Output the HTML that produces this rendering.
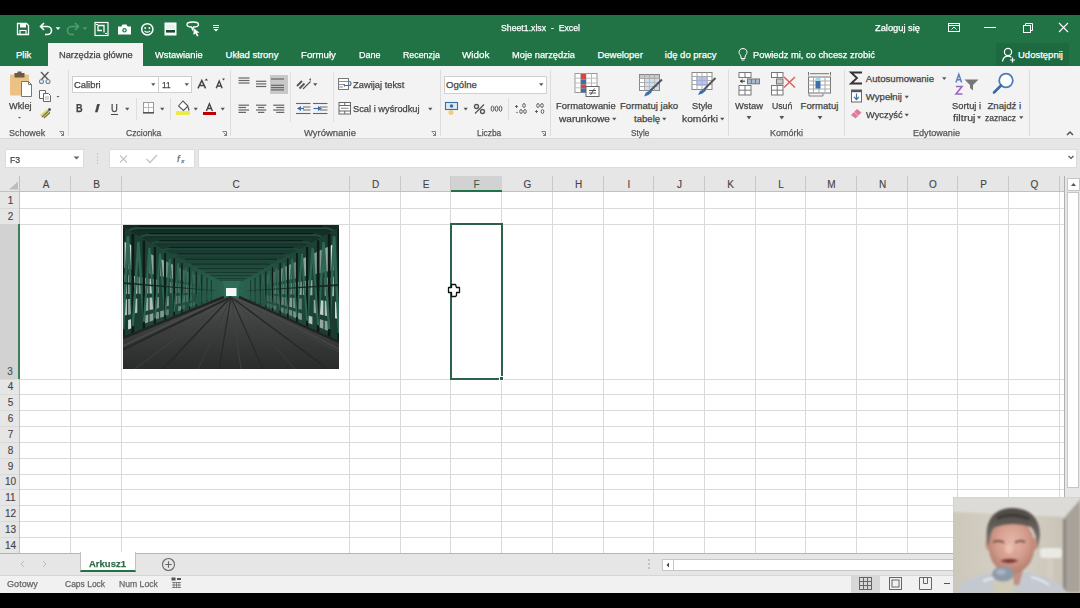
<!DOCTYPE html><html><head><meta charset="utf-8"><style>
*{margin:0;padding:0;box-sizing:border-box}
html,body{width:1080px;height:608px;overflow:hidden;background:#000}
body{font-family:"Liberation Sans",sans-serif;color:#444}
.a{position:absolute}
.t{position:absolute;white-space:pre;line-height:1;-webkit-text-stroke:0.25px currentColor}
#root{position:relative;width:1080px;height:608px;overflow:hidden;background:#fff}
.w{color:#fff}
.rb{font-size:9.6px;color:#444}
.gl{font-size:9.4px;color:#666}
.hd{font-size:10px;color:#444;text-align:center;-webkit-text-stroke:0.12px currentColor}
</style></head><body><div id="root">
<div class="a" style="left:0;top:0;width:1080px;height:15px;background:#000"></div>
<div class="a" style="left:0;top:15px;width:1080px;height:51px;background:#217346"></div>
<div class="a" style="left:0;top:593px;width:1080px;height:15px;background:#000"></div>
<div class="a" style="left:48px;top:43px;width:95px;height:24px;background:#f3f3f3"></div>
<div class="a" style="left:0;top:66px;width:1080px;height:73px;background:#f3f3f3;border-bottom:1px solid #d8d8d8"></div>
<div class="a" style="left:0;top:139px;width:1080px;height:37px;background:#e6e6e6"></div>
<div class="a" style="left:5px;top:149px;width:79px;height:19px;background:#fff;border:1px solid #dcdcdc"></div>
<div class="a" style="left:109px;top:149px;width:86px;height:19px;background:#fff;border:1px solid #dcdcdc"></div>
<div class="a" style="left:198px;top:149px;width:879px;height:19px;background:#fff;border:1px solid #dcdcdc"></div>
<div class="a" style="left:0;top:176px;width:1066px;height:16px;background:#e6e6e6"></div>
<div class="a" style="left:0;top:192px;width:20px;height:361px;background:#e6e6e6"></div>
<svg class="a" style="left:0;top:0" width="1080" height="608"><rect x="70" y="176" width="1" height="16" fill="#c8c8c8"/><rect x="70" y="192" width="1" height="361" fill="#dadada"/><rect x="121" y="176" width="1" height="16" fill="#c8c8c8"/><rect x="121" y="192" width="1" height="361" fill="#dadada"/><rect x="349" y="176" width="1" height="16" fill="#c8c8c8"/><rect x="349" y="192" width="1" height="361" fill="#dadada"/><rect x="400" y="176" width="1" height="16" fill="#c8c8c8"/><rect x="400" y="192" width="1" height="361" fill="#dadada"/><rect x="450" y="176" width="1" height="16" fill="#c8c8c8"/><rect x="450" y="192" width="1" height="361" fill="#dadada"/><rect x="501" y="176" width="1" height="16" fill="#c8c8c8"/><rect x="501" y="192" width="1" height="361" fill="#dadada"/><rect x="552" y="176" width="1" height="16" fill="#c8c8c8"/><rect x="552" y="192" width="1" height="361" fill="#dadada"/><rect x="603" y="176" width="1" height="16" fill="#c8c8c8"/><rect x="603" y="192" width="1" height="361" fill="#dadada"/><rect x="653" y="176" width="1" height="16" fill="#c8c8c8"/><rect x="653" y="192" width="1" height="361" fill="#dadada"/><rect x="704" y="176" width="1" height="16" fill="#c8c8c8"/><rect x="704" y="192" width="1" height="361" fill="#dadada"/><rect x="755" y="176" width="1" height="16" fill="#c8c8c8"/><rect x="755" y="192" width="1" height="361" fill="#dadada"/><rect x="805" y="176" width="1" height="16" fill="#c8c8c8"/><rect x="805" y="192" width="1" height="361" fill="#dadada"/><rect x="856" y="176" width="1" height="16" fill="#c8c8c8"/><rect x="856" y="192" width="1" height="361" fill="#dadada"/><rect x="907" y="176" width="1" height="16" fill="#c8c8c8"/><rect x="907" y="192" width="1" height="361" fill="#dadada"/><rect x="957" y="176" width="1" height="16" fill="#c8c8c8"/><rect x="957" y="192" width="1" height="361" fill="#dadada"/><rect x="1008" y="176" width="1" height="16" fill="#c8c8c8"/><rect x="1008" y="192" width="1" height="361" fill="#dadada"/><rect x="1059" y="176" width="1" height="16" fill="#c8c8c8"/><rect x="1059" y="192" width="1" height="361" fill="#dadada"/><rect x="0" y="208" width="1064" height="1" fill="#dadada"/><rect x="0" y="224" width="1064" height="1" fill="#dadada"/><rect x="0" y="379" width="1064" height="1" fill="#dadada"/><rect x="0" y="394" width="1064" height="1" fill="#dadada"/><rect x="0" y="410" width="1064" height="1" fill="#dadada"/><rect x="0" y="426" width="1064" height="1" fill="#dadada"/><rect x="0" y="442" width="1064" height="1" fill="#dadada"/><rect x="0" y="458" width="1064" height="1" fill="#dadada"/><rect x="0" y="474" width="1064" height="1" fill="#dadada"/><rect x="0" y="489" width="1064" height="1" fill="#dadada"/><rect x="0" y="505" width="1064" height="1" fill="#dadada"/><rect x="0" y="521" width="1064" height="1" fill="#dadada"/><rect x="0" y="537" width="1064" height="1" fill="#dadada"/><rect x="0" y="553" width="1064" height="1" fill="#dadada"/><rect x="19" y="176" width="1" height="377" fill="#c0c0c0"/><rect x="0" y="191" width="1064" height="1" fill="#c0c0c0"/><path d="M18 181.5V189.5H9Z" fill="#bdbdbd"/></svg>
<div class="t hd" style="left:21px;top:180px;width:50px">A</div>
<div class="t hd" style="left:71px;top:180px;width:51px">B</div>
<div class="t hd" style="left:122px;top:180px;width:228px">C</div>
<div class="t hd" style="left:350px;top:180px;width:51px">D</div>
<div class="t hd" style="left:401px;top:180px;width:50px">E</div>
<div class="t hd" style="left:451px;top:180px;width:51px">F</div>
<div class="t hd" style="left:502px;top:180px;width:51px">G</div>
<div class="t hd" style="left:553px;top:180px;width:51px">H</div>
<div class="t hd" style="left:604px;top:180px;width:50px">I</div>
<div class="t hd" style="left:654px;top:180px;width:51px">J</div>
<div class="t hd" style="left:705px;top:180px;width:51px">K</div>
<div class="t hd" style="left:756px;top:180px;width:50px">L</div>
<div class="t hd" style="left:806px;top:180px;width:51px">M</div>
<div class="t hd" style="left:857px;top:180px;width:51px">N</div>
<div class="t hd" style="left:908px;top:180px;width:50px">O</div>
<div class="t hd" style="left:958px;top:180px;width:51px">P</div>
<div class="t hd" style="left:1009px;top:180px;width:51px">Q</div>
<div class="t hd" style="left:0;top:196px;width:21px">1</div>
<div class="t hd" style="left:0;top:212px;width:21px">2</div>
<div class="t hd" style="left:0;top:367px;width:21px">3</div>
<div class="t hd" style="left:0;top:382px;width:21px">4</div>
<div class="t hd" style="left:0;top:398px;width:21px">5</div>
<div class="t hd" style="left:0;top:414px;width:21px">6</div>
<div class="t hd" style="left:0;top:430px;width:21px">7</div>
<div class="t hd" style="left:0;top:446px;width:21px">8</div>
<div class="t hd" style="left:0;top:462px;width:21px">9</div>
<div class="t hd" style="left:0;top:477px;width:21px">10</div>
<div class="t hd" style="left:0;top:493px;width:21px">11</div>
<div class="t hd" style="left:0;top:509px;width:21px">12</div>
<div class="t hd" style="left:0;top:525px;width:21px">13</div>
<div class="t hd" style="left:0;top:541px;width:21px">14</div>
<div class="a" style="left:0;top:224px;width:20px;height:155px;background:#d2d2d2;border-right:2px solid #3f7d5c"></div>
<div class="t hd" style="left:0;top:367px;width:20px;color:#3c5a4a">3</div>
<div class="a" style="left:451px;top:176px;width:51px;height:16px;background:#d2d2d2;border-bottom:2px solid #217346"></div>
<div class="t hd" style="left:451px;top:180px;width:51px;color:#3c5a4a">F</div>
<div class="a" style="left:450px;top:223px;width:53px;height:157px;border:2px solid #2c6249"></div>
<div class="a" style="left:499px;top:376px;width:5px;height:5px;background:#2c6249;border:1px solid #fff"></div>
<div class="a" style="left:1064px;top:176px;width:16px;height:377px;background:#e6e6e6;border-left:1px solid #b0b0b0"></div>
<div class="a" style="left:1067px;top:178px;width:13px;height:13px;background:#fff;border:1px solid #c6c6c6"></div>
<svg class="a" style="left:1067px;top:178px" width="13" height="13"><path d="M4 8 L6.5 5 L9 8 Z" fill="#555"/></svg>
<div class="a" style="left:1067px;top:192px;width:12px;height:296px;background:#fff;border:1px solid #c6c6c6"></div>
<div class="a" style="left:0;top:553px;width:1080px;height:22px;background:#e6e6e6;border-top:1px solid #b4b4b4"></div>
<div class="a" style="left:80px;top:552px;width:56px;height:20px;background:#fff;border-left:1px solid #c0c0c0;border-right:1px solid #c0c0c0;border-bottom:2px solid #217346"></div>
<div class="t" style="left:89px;top:559.20px;font-size:9.8px;color:#2f6e4a;font-weight:bold;transform:scaleX(0.970);transform-origin:0 0;">Arkusz1</div>
<svg class="a" style="left:15px;top:558px" width="40" height="12"><path d="M9 3 L6 6 L9 9" stroke="#bbb" fill="none"/><path d="M28 3 L31 6 L28 9" stroke="#bbb" fill="none"/></svg>
<svg class="a" style="left:161px;top:557px" width="15" height="15"><circle cx="7.5" cy="7.5" r="6" stroke="#666" stroke-width="1.1" fill="none"/><path d="M7.5 4.3V10.7M4.3 7.5H10.7" stroke="#666" stroke-width="1.1"/></svg>
<svg class="a" style="left:646px;top:557px" width="6" height="14"><circle cx="3" cy="3" r="0.8" fill="#999"/><circle cx="3" cy="7" r="0.8" fill="#999"/><circle cx="3" cy="11" r="0.8" fill="#999"/></svg>
<div class="a" style="left:662px;top:559px;width:418px;height:12px;background:#fff;border:1px solid #c6c6c6"></div>
<div class="a" style="left:662px;top:559px;width:12px;height:12px;background:#fff;border:1px solid #c6c6c6"></div>
<svg class="a" style="left:662px;top:559px" width="12" height="12"><path d="M7 3.5 L4.5 6 L7 8.5 Z" fill="#444"/></svg>
<div class="a" style="left:0;top:575px;width:1080px;height:18px;background:#f1f1f1;border-top:1px solid #d6d6d6"></div>
<div class="t" style="left:7px;top:578.84px;font-size:9.4px;color:#666;font-weight:normal;transform:scaleX(0.973);transform-origin:0 0;">Gotowy</div>
<div class="t" style="left:65px;top:578.84px;font-size:9.4px;color:#666;font-weight:normal;transform:scaleX(0.905);transform-origin:0 0;">Caps Lock</div>
<div class="t" style="left:118.5px;top:578.84px;font-size:9.4px;color:#666;font-weight:normal;transform:scaleX(0.919);transform-origin:0 0;">Num Lock</div>
<svg class="a" style="left:171px;top:577px" width="11" height="12"><rect x="0.5" y="0.5" width="4" height="3" fill="#555"/><rect x="6" y="1" width="4" height="2" fill="#555"/><path d="M1 5.5H10M1 8H10M1 10.5H10M3 5V11M5.5 5V11M8 5V11" stroke="#777" stroke-width="0.9"/></svg>
<div class="a" style="left:851px;top:576px;width:29px;height:17px;background:#d8d8d8"></div>
<svg class="a" style="left:859px;top:577px" width="13" height="13"><rect x="0.5" y="0.5" width="12" height="12" fill="none" stroke="#666"/><path d="M4.5 0.5V12.5M8.5 0.5V12.5M0.5 4.5H12.5M0.5 8.5H12.5" stroke="#666"/></svg>
<svg class="a" style="left:889px;top:577px" width="13" height="13"><rect x="0.5" y="0.5" width="12" height="12" fill="none" stroke="#666"/><rect x="3" y="3" width="7" height="7" fill="none" stroke="#666"/></svg>
<svg class="a" style="left:919px;top:577px" width="13" height="13"><path d="M0.5 0.5H12.5V12.5H0.5Z M4.5 0.5V6.5H8.5V0.5" fill="none" stroke="#666"/></svg>
<div class="a" style="left:944px;top:583px;width:6px;height:1px;background:#555"></div>
<div class="t" style="left:501px;top:23.46px;font-size:9.5px;color:#fff;font-weight:normal;transform:scaleX(0.918);transform-origin:0 0;">Sheet1.xlsx  -  Excel</div>
<div class="t" style="left:875px;top:23.46px;font-size:9.5px;color:#fff;font-weight:normal;transform:scaleX(0.980);transform-origin:0 0;">Zaloguj się</div>
<svg class="a" style="left:940px;top:18px" width="140" height="20"><rect x="8.5" y="5.5" width="11" height="8" fill="none" stroke="#fff" stroke-width="1"/><path d="M8.5 7.5H19.5" stroke="#fff"/><path d="M11.5 11.5L14 9L16.5 11.5" fill="none" stroke="#fff"/><path d="M44 9.5H56" stroke="#fff" stroke-width="1"/><rect x="83.5" y="7.5" width="7" height="7" fill="none" stroke="#fff"/><path d="M85.5 7.5V5.5H92.5V12.5H90.5" fill="none" stroke="#fff"/><path d="M119 5L128 14M128 5L119 14" stroke="#fff" stroke-width="1.1"/></svg>
<svg class="a" style="left:0;top:15px" width="230" height="27" fill="none" stroke="#fff"><path d="M17.5 8.5H26.5L28.5 10.5V19.5H17.5Z" stroke-width="1.3"/><rect x="20" y="8.5" width="6" height="4" fill="#fff" stroke="none"/><rect x="20" y="15.5" width="6" height="4" stroke-width="1.1"/><path d="M41 11.5H47.5C50 11.5 51.5 13.5 51.5 15.5C51.5 17.5 50 19.5 47.5 19.5H45" stroke-width="1.6"/><path d="M44 8L40.5 11.5L44 15" stroke-width="1.6"/><path d="M55.60 12.20H60.40L58.00 15.10Z" fill="#fff" stroke="none"/><g stroke="#4f9b72"><path d="M78 11.5H71.5C69 11.5 67.5 13.5 67.5 15.5C67.5 17.5 69 19.5 71.5 19.5H74" stroke-width="1.6"/><path d="M75 8L78.5 11.5L75 15" stroke-width="1.6"/></g><path d="M82.60 12.20H87.40L85.00 15.10Z" fill="#4f9b72" stroke="none"/><rect x="95" y="7.5" width="13" height="13" stroke-width="1.2"/><path d="M98 10.5H104V17.5M98 10.5V15.5H102" stroke-width="1.3"/><path d="M96 9.5H98M105 18.5H107" stroke-width="1"/><path d="M118 11.5H121.5L122.5 9.5H126.5L127.5 11.5H131V19.5H118Z" fill="#fff" stroke="none"/><circle cx="124.5" cy="15.3" r="2.2" fill="#217346" stroke="none"/><circle cx="124.5" cy="15.3" r="1.1" fill="#fff" stroke="none"/><circle cx="147.3" cy="14.3" r="5.6" stroke-width="1.5"/><circle cx="145.2" cy="13" r="0.9" fill="#fff" stroke="none"/><circle cx="149.4" cy="13" r="0.9" fill="#fff" stroke="none"/><path d="M144.5 15.8Q147.3 18.6 150.1 15.8" stroke-width="1.2"/><rect x="164.5" y="7.5" width="12" height="13" fill="#fff" stroke="none"/><rect x="166" y="15" width="9" height="2.6" fill="#1a4a2e" stroke="none"/><rect x="166" y="9.5" width="9" height="4.5" fill="#e8f0ea" stroke="none"/><path d="M187 9.5C187 7.5 189 7 193 7C197 7 198.5 7.5 198.5 9.5C198.5 11.5 196.5 12 193.5 12L192.5 14.5L191.5 12C188.5 12 187 11.5 187 9.5Z" stroke-width="1.3"/><path d="M193.5 13V20L195.5 18.5L197 21.5L198.5 20.8L197 17.8H199.5Z" fill="#fff" stroke="none"/><path d="M213 10.5H219M213 12.5H219" stroke-width="0.9"/><path d="M213.5 14H218.5L216 16.5Z" fill="#fff" stroke="none"/></svg>
<div class="t" style="left:16px;top:49.96px;font-size:9.5px;color:#fff;font-weight:normal;">Plik</div>
<div class="t" style="left:59px;top:49.96px;font-size:9.5px;color:#444;font-weight:normal;transform:scaleX(0.976);transform-origin:0 0;">Narzędzia główne</div>
<div class="t" style="left:155px;top:49.96px;font-size:9.5px;color:#fff;font-weight:normal;transform:scaleX(0.982);transform-origin:0 0;">Wstawianie</div>
<div class="t" style="left:225.6px;top:49.96px;font-size:9.5px;color:#fff;font-weight:normal;">Układ strony</div>
<div class="t" style="left:300.8px;top:49.96px;font-size:9.5px;color:#fff;font-weight:normal;transform:scaleX(1.017);transform-origin:0 0;">Formuły</div>
<div class="t" style="left:358.5px;top:49.96px;font-size:9.5px;color:#fff;font-weight:normal;transform:scaleX(0.947);transform-origin:0 0;">Dane</div>
<div class="t" style="left:402.8px;top:49.96px;font-size:9.5px;color:#fff;font-weight:normal;transform:scaleX(0.929);transform-origin:0 0;">Recenzja</div>
<div class="t" style="left:461.9px;top:49.96px;font-size:9.5px;color:#fff;font-weight:normal;transform:scaleX(1.038);transform-origin:0 0;">Widok</div>
<div class="t" style="left:512.2px;top:49.96px;font-size:9.5px;color:#fff;font-weight:normal;transform:scaleX(0.978);transform-origin:0 0;">Moje narzędzia</div>
<div class="t" style="left:597.4px;top:49.96px;font-size:9.5px;color:#fff;font-weight:normal;">Deweloper</div>
<div class="t" style="left:664.8px;top:49.96px;font-size:9.5px;color:#fff;font-weight:normal;">idę do pracy</div>
<div class="t" style="left:753px;top:49.96px;font-size:9.5px;color:#fff;font-weight:normal;transform:scaleX(0.983);transform-origin:0 0;">Powiedz mi, co chcesz zrobić</div>
<svg class="a" style="left:736px;top:46px" width="14" height="16" fill="none" stroke="#fff" stroke-width="1"><path d="M7 2.5C4.5 2.5 3 4.3 3 6.3C3 8.3 5 9.3 5 11V12.5H9V11C9 9.3 11 8.3 11 6.3C11 4.3 9.5 2.5 7 2.5Z"/><path d="M5.5 14H8.5"/></svg>
<div class="a" style="left:996px;top:43px;width:73px;height:23px;background:#1d6a40"></div>
<svg class="a" style="left:1000px;top:46px" width="18" height="18" fill="none" stroke="#fff" stroke-width="1.2"><circle cx="8" cy="6" r="3.6"/><path d="M2.5 15.5C3 12 5 10.2 8 10.2C9.5 10.2 10.5 10.6 11.3 11.2"/><path d="M12.5 11.5V16.5M10 14H15"/></svg>
<div class="t" style="left:1018px;top:50.46px;font-size:9.5px;color:#fff;font-weight:normal;">Udostępnij</div>
<svg class="a" style="left:0;top:66px" width="1080" height="73"><rect x="68" y="4" width="1" height="66" fill="#dcdcdc"/><rect x="230" y="4" width="1" height="66" fill="#dcdcdc"/><rect x="440" y="4" width="1" height="66" fill="#dcdcdc"/><rect x="550" y="4" width="1" height="66" fill="#dcdcdc"/><rect x="728" y="4" width="1" height="66" fill="#dcdcdc"/><rect x="844" y="4" width="1" height="66" fill="#dcdcdc"/><rect x="1029" y="4" width="1" height="66" fill="#dcdcdc"/><rect x="136" y="32" width="1" height="22" fill="#dedede"/><rect x="170" y="32" width="1" height="22" fill="#dedede"/><rect x="290" y="6" width="1" height="50" fill="#e0e0e0"/><rect x="333" y="6" width="1" height="50" fill="#e0e0e0"/><rect x="508" y="32" width="1" height="22" fill="#dedede"/><path d="M59.5 65.5H63.5V69.5 M60.5 66.5L63.5 69.5 M63.5 67V69.5H61" fill="none" stroke="#777" stroke-width="0.9"/><path d="M222.5 65.5H226.5V69.5 M223.5 66.5L226.5 69.5 M226.5 67V69.5H224" fill="none" stroke="#777" stroke-width="0.9"/><path d="M431.5 65.5H435.5V69.5 M432.5 66.5L435.5 69.5 M435.5 67V69.5H433" fill="none" stroke="#777" stroke-width="0.9"/><path d="M541.5 65.5H545.5V69.5 M542.5 66.5L545.5 69.5 M545.5 67V69.5H543" fill="none" stroke="#777" stroke-width="0.9"/><path d="M1067 69L1070 66L1073 69" fill="none" stroke="#555" stroke-width="1.5"/></svg>
<div class="t" style="left:8.5px;top:129.13px;font-size:9.3px;color:#555;font-weight:normal;transform:scaleX(0.959);transform-origin:0 0;">Schowek</div>
<div class="t" style="left:125.6px;top:129.13px;font-size:9.3px;color:#555;font-weight:normal;transform:scaleX(0.926);transform-origin:0 0;">Czcionka</div>
<div class="t" style="left:303.5px;top:129.13px;font-size:9.3px;color:#555;font-weight:normal;transform:scaleX(1.018);transform-origin:0 0;">Wyrównanie</div>
<div class="t" style="left:476.8px;top:129.13px;font-size:9.3px;color:#555;font-weight:normal;transform:scaleX(0.900);transform-origin:0 0;">Liczba</div>
<div class="t" style="left:630.7px;top:129.13px;font-size:9.3px;color:#555;font-weight:normal;transform:scaleX(0.885);transform-origin:0 0;">Style</div>
<div class="t" style="left:769.7px;top:129.13px;font-size:9.3px;color:#555;font-weight:normal;transform:scaleX(0.965);transform-origin:0 0;">Komórki</div>
<div class="t" style="left:913px;top:129.13px;font-size:9.3px;color:#555;font-weight:normal;transform:scaleX(0.978);transform-origin:0 0;">Edytowanie</div>
<svg class="a" style="left:0;top:66px" width="68" height="60"><rect x="10" y="8.5" width="19" height="21" rx="1" fill="#ebc283"/><rect x="14.5" y="7" width="10" height="4.5" fill="#6b5a45"/><rect x="17.5" y="5.5" width="4" height="2.5" fill="#6b5a45"/><path d="M21.5 15.5H28.5L31.5 18.5V30.5H21.5Z" fill="#fff" stroke="#777"/><path d="M28.5 15.5V18.5H31.5" fill="none" stroke="#777"/><path d="M18 51L19.5 52.5L21 51Z" fill="#555"/><path d="M41 6L48.5 14M48.5 6L41 14" stroke="#555" stroke-width="1.3"/><circle cx="41.5" cy="15.5" r="2" fill="none" stroke="#6a88a8" stroke-width="1.1"/><circle cx="48" cy="15.5" r="2" fill="none" stroke="#6a88a8" stroke-width="1.1"/><path d="M39.5 24.5H45.5V32.5H39.5Z" fill="#fff" stroke="#666"/><path d="M43.5 27.5H48.5L50.5 29.5V35.5H43.5Z" fill="#fff" stroke="#666"/><path d="M45 31H49M45 33H49" stroke="#999" stroke-width="0.8"/><path d="M56.5 30L58 31.5L59.5 30Z" fill="#555"/><path d="M40 49L47 43L50 46L43 52Z" fill="#e0d870"/><path d="M42 51L48.5 45M44 52L50 46.5" stroke="#7a6a40" stroke-width="1.1"/><circle cx="49.5" cy="43.5" r="1.5" fill="#555"/></svg>
<div class="t" style="left:8.6px;top:101.37px;font-size:9.6px;color:#444;font-weight:normal;transform:scaleX(0.963);transform-origin:0 0;">Wklej</div>
<div class="a" style="left:72px;top:76px;width:120px;height:17px;background:#fff;border:1px solid #d0d0d0"></div>
<div class="a" style="left:158px;top:76px;width:1px;height:17px;background:#d0d0d0"></div>
<div class="t" style="left:73.7px;top:79.87px;font-size:9.6px;color:#444;font-weight:normal;transform:scaleX(0.981);transform-origin:0 0;">Calibri</div>
<div class="t" style="left:161.7px;top:79.87px;font-size:9.6px;color:#444;font-weight:normal;transform:scaleX(0.853);transform-origin:0 0;">11</div>
<svg class="a" style="left:0;top:66px" width="232" height="60"><path d="M151.10 17.20H155.40L153.25 20.10Z" fill="#555"/><path d="M184.60 17.20H188.90L186.75 20.10Z" fill="#555"/><path d="M198 22.3L201.8 14.5L205.6 22.3M199.4 19.6H204.2" fill="none" stroke="#444" stroke-width="1.5"/><path d="M204.5 14.5L206.3 12.5L208.1 14.5Z" fill="#444"/><path d="M216.2 22.3L219.2 15L222.2 22.3M217.3 20H221.1" fill="none" stroke="#444" stroke-width="1.4"/><path d="M222 12.5L225 12.5L223.5 14.5Z" fill="#444"/></svg>
<div class="t" style="left:76px;top:104.03px;font-size:10px;color:#444;font-weight:bold;transform:scaleX(0.914);transform-origin:0 0;">B</div>
<div class="t" style="left:95px;top:104.03px;font-size:10px;color:#444;font-weight:normal;transform:scaleX(1.548);transform-origin:0 0;font-style:italic;font-weight:bold">I</div>
<div class="t" style="left:111px;top:104.03px;font-size:10px;color:#444;font-weight:normal;transform:scaleX(0.942);transform-origin:0 0;">U</div>
<svg class="a" style="left:0;top:66px" width="232" height="60"><rect x="111" y="48" width="7" height="1" fill="#444"/><path d="M125.10 41.70H129.40L127.25 44.60Z" fill="#555"/><rect x="143.5" y="36.5" width="10" height="10" fill="#fff" stroke="#999"/><path d="M148.5 36.5V46.5M143.5 41.5H153.5" stroke="#bbb"/><rect x="143" y="46" width="11" height="1.6" fill="#555"/><path d="M160.10 41.70H164.40L162.25 44.60Z" fill="#555"/><path d="M178.5 40L183 35L188 40L183.5 44.5Z" fill="#fff" stroke="#555" stroke-width="1.1"/><path d="M187.5 40.5Q189.5 43 188.5 44.5" fill="none" stroke="#555" stroke-width="1.2"/><rect x="176" y="45" width="14" height="4" fill="#ecec48"/><path d="M193.60 41.70H197.90L195.75 44.60Z" fill="#555"/><path d="M206.4 45L209.4 37.8L212.4 45M207.5 42.5H211.3" fill="none" stroke="#444" stroke-width="1.4"/><rect x="203" y="46" width="13" height="3" fill="#c00000"/><path d="M220.60 41.70H224.90L222.75 44.60Z" fill="#555"/></svg>
<div class="a" style="left:270px;top:75px;width:18px;height:19px;background:#c8c8c8"></div>
<svg class="a" style="left:0;top:66px" width="440" height="60"><path d="M238.5 12H249.5" stroke="#666" stroke-width="1.2"/><path d="M238.5 14.5H249.5" stroke="#666" stroke-width="1.2"/><path d="M238.5 17H249.5" stroke="#666" stroke-width="1.2"/><path d="M256 15.3H266.3" stroke="#666" stroke-width="1.2"/><path d="M256 17.9H266.3" stroke="#666" stroke-width="1.2"/><path d="M256 20.5H266.3" stroke="#666" stroke-width="1.2"/><path d="M271 13H284" stroke="#666" stroke-width="1.2"/><path d="M271 19.3H284" stroke="#666" stroke-width="1.2"/><path d="M271 21.6H284" stroke="#666" stroke-width="1.2"/><path d="M271 23.9H284" stroke="#666" stroke-width="1.2"/><path d="M238.5 39.2H249" stroke="#666" stroke-width="1.2"/><path d="M238.5 41.5H246" stroke="#666" stroke-width="1.2"/><path d="M238.5 44H249" stroke="#666" stroke-width="1.2"/><path d="M238.5 46.4H246" stroke="#666" stroke-width="1.2"/><path d="M256 39.2H266.3" stroke="#666" stroke-width="1.2"/><path d="M258 41.5H264.3" stroke="#666" stroke-width="1.2"/><path d="M256 44H266.3" stroke="#666" stroke-width="1.2"/><path d="M258 46.4H264.3" stroke="#666" stroke-width="1.2"/><path d="M273.2 39.2H284.3" stroke="#666" stroke-width="1.2"/><path d="M276.2 41.5H284.3" stroke="#666" stroke-width="1.2"/><path d="M273.2 44H284.3" stroke="#666" stroke-width="1.2"/><path d="M276.2 46.4H284.3" stroke="#666" stroke-width="1.2"/><path d="M297 20L302 15M299.5 22.5L304.5 17.5" stroke="#555" stroke-width="1.8"/><path d="M303 23L310.5 15.5" stroke="#555" stroke-width="1.1"/><path d="M309 13.5L311 12L310.8 15Z" fill="#555"/><path d="M313.10 17.20H317.40L315.25 20.10Z" fill="#555"/><path d="M296 37.5H310.5" stroke="#666" stroke-width="1.1"/><path d="M296 47.5H310.5" stroke="#666" stroke-width="1.1"/><path d="M303 41H310.5" stroke="#777" stroke-width="1.1"/><path d="M303 44H310.5" stroke="#777" stroke-width="1.1"/><path d="M313 37.5H327.5" stroke="#666" stroke-width="1.1"/><path d="M313 47.5H327.5" stroke="#666" stroke-width="1.1"/><path d="M320 41H327.5" stroke="#777" stroke-width="1.1"/><path d="M320 44H327.5" stroke="#777" stroke-width="1.1"/><path d="M297 42.5L301 40V45Z" fill="#3a6fa8"/><path d="M300 42.5H304" stroke="#3a6fa8" stroke-width="1.2"/><path d="M322 42.5L318 40V45Z" fill="#3a6fa8"/><path d="M313.5 42.5H318.5" stroke="#3a6fa8" stroke-width="1.2"/><rect x="338.5" y="12.5" width="10" height="11" fill="#fff" stroke="#777"/><path d="M338.5 15.5H348.5M338.5 18.5H345M338.5 21H343" stroke="#888" stroke-width="0.9"/><path d="M345 19.5H349Q351 19.5 351 17.5Q351 15.5 349 15.5" fill="none" stroke="#3a6fa8" stroke-width="1.1"/><path d="M345 18L343.5 19.5L345 21Z" fill="#3a6fa8"/><rect x="339" y="36.5" width="11.5" height="11.5" fill="#fff" stroke="#666"/><path d="M339 39.5H350.5M339 45H350.5M344.75 36.5V39.5M344.75 45V48" stroke="#666"/><path d="M341 42.25H348.5" stroke="#777" stroke-width="0.9"/><path d="M428.10 41.70H432.40L430.25 44.60Z" fill="#555"/></svg>
<div class="t" style="left:353.4px;top:80.37px;font-size:9.6px;color:#444;font-weight:normal;transform:scaleX(0.973);transform-origin:0 0;">Zawijaj tekst</div>
<div class="t" style="left:353.4px;top:104.37px;font-size:9.6px;color:#444;font-weight:normal;transform:scaleX(0.968);transform-origin:0 0;">Scal i wyśrodkuj</div>
<div class="a" style="left:444px;top:76px;width:103px;height:18px;background:#fff;border:1px solid #d0d0d0"></div>
<div class="t" style="left:446px;top:80.37px;font-size:9.6px;color:#444;font-weight:normal;">Ogólne</div>
<svg class="a" style="left:0;top:66px" width="550" height="60"><path d="M539.10 17.20H543.40L541.25 20.10Z" fill="#555"/><rect x="445.5" y="36.5" width="12" height="7" fill="#dfe8f0" stroke="#3a6fa8" stroke-width="1.1"/><circle cx="451.5" cy="40" r="1.8" fill="#3a6fa8"/><circle cx="451" cy="46.5" r="2.5" fill="#f0c060" opacity="0.8"/><path d="M463.60 41.70H467.90L465.75 44.60Z" fill="#555"/><path d="M475 47.5L484 38.5" stroke="#555" stroke-width="1.3"/><circle cx="476.5" cy="40.5" r="2" fill="none" stroke="#555" stroke-width="1.3"/><circle cx="482.5" cy="45.5" r="2" fill="none" stroke="#555" stroke-width="1.3"/><ellipse cx="492.5" cy="42.7" rx="1.4" ry="2.6" fill="none" stroke="#555" stroke-width="1"/><ellipse cx="496.5" cy="42.7" rx="1.4" ry="2.6" fill="none" stroke="#555" stroke-width="1"/><ellipse cx="500.5" cy="42.7" rx="1.4" ry="2.6" fill="none" stroke="#555" stroke-width="1"/><path d="M515 40.5H518M516.5 39V42" stroke="#555" stroke-width="0.9"/><ellipse cx="524" cy="39.5" rx="1.3" ry="2" fill="none" stroke="#555" stroke-width="0.9"/><circle cx="517" cy="46.5" r="0.7" fill="#555"/><ellipse cx="521" cy="45.5" rx="1.3" ry="2" fill="none" stroke="#555" stroke-width="0.9"/><ellipse cx="525" cy="45.5" rx="1.3" ry="2" fill="none" stroke="#555" stroke-width="0.9"/><ellipse cx="538" cy="39.5" rx="1.3" ry="2" fill="none" stroke="#555" stroke-width="0.9"/><ellipse cx="542" cy="39.5" rx="1.3" ry="2" fill="none" stroke="#555" stroke-width="0.9"/><path d="M535 45.5H538M536.5 44V47" stroke="#555" stroke-width="0.9"/><ellipse cx="542.5" cy="45.5" rx="1.3" ry="2" fill="none" stroke="#555" stroke-width="0.9"/></svg>
<svg class="a" style="left:0;top:66px" width="730" height="60"><rect x="575" y="7.5" width="22" height="19" fill="#fff" stroke="#999"/><path d="M580.5 7.5V26.5" stroke="#bbb"/><path d="M586 7.5V26.5" stroke="#bbb"/><path d="M591.5 7.5V26.5" stroke="#bbb"/><path d="M575 12.2H597" stroke="#bbb"/><path d="M575 17H597" stroke="#bbb"/><path d="M575 21.8H597" stroke="#bbb"/><rect x="581" y="8" width="5" height="5.5" fill="#d9453a"/><rect x="581" y="13.5" width="5" height="5" fill="#3a6fa8"/><rect x="581" y="18.5" width="5" height="4" fill="#d9453a"/><rect x="581" y="22.5" width="5" height="4" fill="#3a6fa8"/><rect x="586" y="20.5" width="13" height="10" fill="#fff" stroke="#666"/><path d="M589 24.5H596M589 27H596M590.5 29L594.5 22.5" stroke="#444" stroke-width="0.9"/><rect x="639.5" y="8.5" width="20" height="16" fill="#fff" stroke="#888"/><rect x="640" y="9" width="19" height="3.5" fill="#c9c9c9"/><path d="M644.5 8.5V24.5" stroke="#aaa"/><path d="M649.5 8.5V24.5" stroke="#aaa"/><path d="M654.5 8.5V24.5" stroke="#aaa"/><path d="M639.5 12.5H659.5" stroke="#aaa"/><path d="M639.5 16.5H659.5" stroke="#aaa"/><path d="M639.5 20.5H659.5" stroke="#aaa"/><rect x="645" y="13" width="14" height="11" fill="#b8c8dc" opacity="0.6"/><path d="M662 13.5L650 25" stroke="#555" stroke-width="2"/><path d="M651 24L646 26.5L644 30.5L648.5 29L652 26Z" fill="#3a6fa8"/><rect x="692" y="6.5" width="20" height="17" fill="#fff" stroke="#888"/><path d="M697 6.5V23.5" stroke="#aaa"/><path d="M702 6.5V23.5" stroke="#aaa"/><path d="M707 6.5V23.5" stroke="#aaa"/><path d="M692 10.5H712" stroke="#aaa"/><path d="M692 14.5H712" stroke="#aaa"/><path d="M692 18.5H712" stroke="#aaa"/><rect x="696" y="11" width="12" height="9" fill="#9fb0e0" opacity="0.75"/><path d="M715.5 12L704 23.5" stroke="#555" stroke-width="2"/><path d="M705 22.5L700 25L698 29L702.5 27.5L706 24.5Z" fill="#3a6fa8"/><path d="M612.10 51.70H616.40L614.25 54.60Z" fill="#555"/><path d="M662.10 51.70H666.40L664.25 54.60Z" fill="#555"/><path d="M720.10 51.70H724.40L722.25 54.60Z" fill="#555"/></svg>
<div class="t" style="left:556px;top:100.87px;font-size:9.6px;color:#444;font-weight:normal;transform:scaleX(0.982);transform-origin:0 0;">Formatowanie</div>
<div class="t" style="left:559px;top:113.87px;font-size:9.6px;color:#444;font-weight:normal;transform:scaleX(1.050);transform-origin:0 0;">warunkowe</div>
<div class="t" style="left:620px;top:100.87px;font-size:9.6px;color:#444;font-weight:normal;">Formatuj jako</div>
<div class="t" style="left:634px;top:113.87px;font-size:9.6px;color:#444;font-weight:normal;">tabelę</div>
<div class="t" style="left:692px;top:100.87px;font-size:9.6px;color:#444;font-weight:normal;transform:scaleX(0.961);transform-origin:0 0;">Style</div>
<div class="t" style="left:682px;top:113.87px;font-size:9.6px;color:#444;font-weight:normal;transform:scaleX(1.071);transform-origin:0 0;">komórki</div>
<svg class="a" style="left:0;top:66px" width="845" height="60"><rect x="739" y="6.5" width="12" height="5" fill="#fff" stroke="#777"/><path d="M745 6.5V11.5" stroke="#777"/><rect x="747.5" y="13" width="12" height="4.8" fill="#aab8cc" stroke="#777"/><path d="M751.5 13V17.8M755.5 13V17.8" stroke="#777"/><path d="M740 15.2H745" stroke="#444" stroke-width="1.2"/><path d="M740 15.2L742.5 13V17.4Z" fill="#444"/><rect x="739" y="19.5" width="12" height="9.5" fill="#fff" stroke="#777"/><path d="M745 19.5V29M739 24.2H751" stroke="#777"/><rect x="771.5" y="6.5" width="11.5" height="5" fill="#fff" stroke="#777"/><path d="M777.25 6.5V11.5" stroke="#777"/><rect x="776.5" y="13" width="6.5" height="5" fill="#c8c8c8" stroke="#777"/><rect x="771.5" y="19.5" width="11.5" height="9.5" fill="#fff" stroke="#777"/><path d="M777.25 19.5V29M771.5 24.2H783" stroke="#777"/><path d="M784 11L795 21.5M795 11L784 21.5" stroke="#d9605a" stroke-width="1.5"/><path d="M808.5 6V9.5M830.5 6V9.5M810 7.7H829" stroke="#666" stroke-width="0.9"/><rect x="808.5" y="11" width="22" height="16" fill="#fff" stroke="#777"/><path d="M813.5 11V27" stroke="#aaa"/><path d="M819 11V27" stroke="#aaa"/><path d="M825 11V27" stroke="#aaa"/><path d="M808.5 15H830.5" stroke="#aaa"/><path d="M808.5 19H830.5" stroke="#aaa"/><path d="M808.5 23H830.5" stroke="#aaa"/><rect x="815.5" y="15" width="5" height="7.5" fill="#3a6fa8"/><rect x="815.5" y="12" width="5" height="3" fill="#a8d8e8"/><path d="M809 27.5V30H823V27.5" fill="none" stroke="#777" stroke-width="0.9"/><path d="M746.60 50.00H751.40L749.00 53.40Z" fill="#555"/><path d="M779.40 50.00H784.20L781.80 53.40Z" fill="#555"/><path d="M817.60 50.00H822.40L820.00 53.40Z" fill="#555"/></svg>
<div class="t" style="left:735px;top:101.37px;font-size:9.6px;color:#444;font-weight:normal;transform:scaleX(0.972);transform-origin:0 0;">Wstaw</div>
<div class="t" style="left:771.7px;top:101.37px;font-size:9.6px;color:#444;font-weight:normal;transform:scaleX(0.906);transform-origin:0 0;">Usuń</div>
<div class="t" style="left:800.6px;top:101.37px;font-size:9.6px;color:#444;font-weight:normal;">Formatuj</div>
<svg class="a" style="left:0;top:66px" width="1080" height="60"><path d="M862 6.5H851L857 12L851 17.5H862" fill="none" stroke="#333" stroke-width="1.8"/><path d="M942.10 11.20H946.40L944.25 14.10Z" fill="#555"/><rect x="851.5" y="24" width="10" height="12" fill="#fff" stroke="#666"/><rect x="851.5" y="24" width="10" height="2.2" fill="#555"/><path d="M856.5 27.5V33M854 30.8L856.5 33.5L859 30.8" fill="none" stroke="#3a6fa8" stroke-width="1.2"/><path d="M904.60 29.70H908.90L906.75 32.60Z" fill="#555"/><path d="M851 49L857 43L861.5 46.5L855.5 52.5Z" fill="#e07a96"/><path d="M854 46L858.5 50" stroke="#f3b7c8" stroke-width="1"/><path d="M904.60 47.70H908.90L906.75 50.60Z" fill="#555"/><path d="M956 16.5L958.8 8.3L961.6 16.5M957 13.8H960.6" fill="none" stroke="#5b7fc0" stroke-width="1.5"/><path d="M956 20.5H962L956 28H962.5" fill="none" stroke="#9a68c0" stroke-width="1.6"/><path d="M964.5 13.5H978.5L973 19V24.5L970 22V19Z" fill="#777"/><path d="M976.90 50.20H981.20L979.05 53.10Z" fill="#555"/><circle cx="1006" cy="14.5" r="6.8" fill="#fff" stroke="#4a7cb8" stroke-width="1.8"/><path d="M1001 19.5L994 26.5" stroke="#3a6aa8" stroke-width="2.6" stroke-linecap="round"/><path d="M1019.10 50.20H1023.40L1021.25 53.10Z" fill="#555"/></svg>
<div class="t" style="left:865.8px;top:73.87px;font-size:9.6px;color:#444;font-weight:normal;">Autosumowanie</div>
<div class="t" style="left:865.8px;top:91.87px;font-size:9.6px;color:#444;font-weight:normal;">Wypełnij</div>
<div class="t" style="left:865.8px;top:109.87px;font-size:9.6px;color:#444;font-weight:normal;transform:scaleX(0.971);transform-origin:0 0;">Wyczyść</div>
<div class="t" style="left:951.7px;top:100.87px;font-size:9.6px;color:#444;font-weight:normal;transform:scaleX(0.974);transform-origin:0 0;">Sortuj i</div>
<div class="t" style="left:952.5px;top:113.37px;font-size:9.6px;color:#444;font-weight:normal;transform:scaleX(1.110);transform-origin:0 0;">filtruj</div>
<div class="t" style="left:987.5px;top:100.87px;font-size:9.6px;color:#444;font-weight:normal;">Znajdź i</div>
<div class="t" style="left:985px;top:113.37px;font-size:9.6px;color:#444;font-weight:normal;transform:scaleX(0.880);transform-origin:0 0;">zaznacz</div>
<div class="t" style="left:10.2px;top:155.20px;font-size:9.8px;color:#444;font-weight:normal;transform:scaleX(0.892);transform-origin:0 0;">F3</div>
<svg class="a" style="left:0;top:139px" width="1080" height="37"><path d="M73.5 17.5H79.5L76.5 20.5Z" fill="#666"/><circle cx="97.5" cy="15" r="0.6" fill="#aaa"/><circle cx="97.5" cy="18" r="0.6" fill="#aaa"/><circle cx="97.5" cy="21" r="0.6" fill="#aaa"/><circle cx="97.5" cy="24" r="0.6" fill="#aaa"/><path d="M120 16.5L127 23.5M127 16.5L120 23.5" stroke="#c4c4c4" stroke-width="1.2"/><path d="M146.5 20L150 23.5L157 16" fill="none" stroke="#c4c4c4" stroke-width="1.4"/><path d="M1068.5 17L1071 19.5L1073.5 17" fill="none" stroke="#555" stroke-width="1.2"/></svg>
<div class="t" style="left:177px;top:154.46px;font-size:9.5px;color:#666;font-weight:normal;font-style:italic;font-family:"Liberation Serif",serif">f</div>
<div class="t" style="left:181.2px;top:157.92px;font-size:6px;color:#666;font-weight:normal;font-style:italic;font-family:"Liberation Serif",serif">x</div>
<svg class="a" style="left:446px;top:282px" width="16" height="17"><path d="M5.5 2.5H9.5L10.5 5.5H13.5V10.5H10.5V13.5L9.5 14.5H5.5V10.5H2.5V5.5H5.5Z" fill="#fff" stroke="#111" stroke-width="1.3" stroke-linejoin="round"/></svg>
<div class="a" style="left:123px;top:225px;width:216px;height:144px;overflow:hidden"><svg style="display:block" width="216" height="144" viewBox="0 0 216 144"><defs><filter id="bl" x="-5%" y="-5%" width="110%" height="110%"><feGaussianBlur stdDeviation="0.6"/></filter><linearGradient id="cg" x1="0" y1="0" x2="0" y2="1"><stop offset="0" stop-color="#132822"/><stop offset="0.5" stop-color="#1b3e33"/><stop offset="1" stop-color="#2a5e4b"/></linearGradient><linearGradient id="fg" x1="0" y1="0" x2="0" y2="1"><stop offset="0" stop-color="#4f5250"/><stop offset="0.35" stop-color="#404241"/><stop offset="1" stop-color="#2a2c2b"/></linearGradient><linearGradient id="lw" x1="0" y1="0" x2="1" y2="0"><stop offset="0" stop-color="#193a2f"/><stop offset="0.6" stop-color="#214c3d"/><stop offset="1" stop-color="#2b6351"/></linearGradient><linearGradient id="rw" x1="1" y1="0" x2="0" y2="0"><stop offset="0" stop-color="#193a2f"/><stop offset="0.6" stop-color="#214c3d"/><stop offset="1" stop-color="#2b6351"/></linearGradient></defs><g><rect width="216" height="144" fill="#142a23"/><path d="M0 0H216L118 60H99Z" fill="url(#cg)"/><path d="M0.0 19.0Q0.0 3.0 16.0 3.0H200.0Q216.0 3.0 216.0 19.0" fill="none" stroke="#214d3f" stroke-width="2.20"/><path d="M16.0 1.5H200.0" stroke="#0b1814" stroke-width="1.40"/><path d="M11.6 24.1Q11.6 9.9 25.9 9.9H190.1Q204.4 9.9 204.4 24.1" fill="none" stroke="#214d3f" stroke-width="1.96"/><path d="M25.9 8.5H190.1" stroke="#0b1814" stroke-width="1.25"/><path d="M23.6 29.5Q23.6 17.0 36.1 17.0H179.9Q192.4 17.0 192.4 29.5" fill="none" stroke="#214d3f" stroke-width="1.72"/><path d="M36.1 15.8H179.9" stroke="#0b1814" stroke-width="1.09"/><path d="M35.0 34.6Q35.0 23.8 45.8 23.8H170.2Q181.0 23.8 181.0 34.6" fill="none" stroke="#214d3f" stroke-width="1.49"/><path d="M45.8 22.7H170.2" stroke="#0b1814" stroke-width="0.95"/><path d="M45.2 39.1Q45.2 29.8 54.5 29.8H161.5Q170.8 29.8 170.8 39.1" fill="none" stroke="#214d3f" stroke-width="1.28"/><path d="M54.5 28.9H161.5" stroke="#0b1814" stroke-width="0.81"/><path d="M54.0 43.0Q54.0 35.0 62.0 35.0H154.0Q162.0 35.0 162.0 43.0" fill="none" stroke="#214d3f" stroke-width="1.10"/><path d="M62.0 34.2H154.0" stroke="#0b1814" stroke-width="0.70"/><path d="M62.0 46.6Q62.0 39.8 68.9 39.8H147.1Q154.0 39.8 154.0 46.6" fill="none" stroke="#214d3f" stroke-width="0.94"/><path d="M68.9 39.1H147.1" stroke="#0b1814" stroke-width="0.60"/><path d="M69.4 49.9Q69.4 44.1 75.1 44.1H140.9Q146.6 44.1 146.6 49.9" fill="none" stroke="#214d3f" stroke-width="0.79"/><path d="M75.1 43.6H140.9" stroke="#0b1814" stroke-width="0.50"/><path d="M75.8 52.7Q75.8 47.9 80.5 47.9H135.5Q140.2 47.9 140.2 52.7" fill="none" stroke="#214d3f" stroke-width="0.66"/><path d="M80.5 47.4H135.5" stroke="#0b1814" stroke-width="0.42"/><path d="M81.0 55.0Q81.0 51.0 85.0 51.0H131.0Q135.0 51.0 135.0 55.0" fill="none" stroke="#214d3f" stroke-width="0.55"/><path d="M85.0 50.6H131.0" stroke="#0b1814" stroke-width="0.40"/><path d="M86.0 57.2Q86.0 53.9 89.2 53.9H126.8Q130.0 53.9 130.0 57.2" fill="none" stroke="#214d3f" stroke-width="0.50"/><path d="M89.2 53.6H126.8" stroke="#0b1814" stroke-width="0.40"/><path d="M90.0 59.0Q90.0 56.3 92.7 56.3H123.3Q126.0 56.3 126.0 59.0" fill="none" stroke="#214d3f" stroke-width="0.50"/><path d="M92.7 56.1H123.3" stroke="#0b1814" stroke-width="0.40"/><path d="M93.6 60.6Q93.6 58.5 95.7 58.5H120.3Q122.4 58.5 122.4 60.6" fill="none" stroke="#214d3f" stroke-width="0.50"/><path d="M95.7 58.3H120.3" stroke="#0b1814" stroke-width="0.40"/><rect x="99" y="56" width="19" height="17" fill="#2f6d59"/><path d="M0 2L101 58V72L0 113Z" fill="url(#lw)"/><path d="M216 2L116 58V72L216 117Z" fill="url(#rw)"/><path d="M0.8 16.6L3.9 18.0L3.9 43.5L0.8 42.8Z" fill="#e9f2ef" opacity="0.80"/><path d="M0.8 49.3L3.9 49.8L3.9 68.9L0.8 69.0Z" fill="#e9f2ef" opacity="0.76"/><path d="M0.8 74.4L3.9 74.2L3.9 90.1L0.8 90.8Z" fill="#e9f2ef" opacity="0.81"/><path d="M5.1 18.6L8.6 20.3L8.6 44.6L5.1 43.8Z" fill="#e9f2ef" opacity="0.83"/><path d="M5.1 50.0L8.6 50.6L8.6 68.8L5.1 68.9Z" fill="#e9f2ef" opacity="0.59"/><path d="M5.1 74.1L8.6 73.9L8.6 89.1L5.1 89.9Z" fill="#e9f2ef" opacity="0.59"/><path d="M5.1 95.1L8.6 94.1L8.6 103.2L5.1 104.5Z" fill="#e9f2ef" opacity="0.86"/><path d="M0.0 3.0V113.0" stroke="#0d1a16" stroke-width="3.00"/><path d="M0.0 104.2L4.9 11.2L9.8 100.8" fill="none" stroke="#2d6652" stroke-width="2.70"/><path d="M0.0 58.0L9.8 58.8" stroke="#142b24" stroke-width="1.80"/><path d="M10.7 51.0L14.3 51.5L14.3 68.7L10.7 68.8Z" fill="#e9f2ef" opacity="0.87"/><path d="M10.7 73.8L14.3 73.5L14.3 87.8L10.7 88.6Z" fill="#e9f2ef" opacity="0.73"/><path d="M15.6 51.8L19.6 52.4L19.6 68.6L15.6 68.7Z" fill="#e9f2ef" opacity="0.51"/><path d="M9.8 8.8V108.8" stroke="#0d1a16" stroke-width="2.73"/><path d="M9.8 100.8L15.4 16.8L20.9 97.0" fill="none" stroke="#2d6652" stroke-width="2.45"/><path d="M9.8 58.8L20.9 59.7" stroke="#142b24" stroke-width="1.64"/><path d="M21.8 52.8L25.3 53.4L25.3 68.5L21.8 68.6Z" fill="#e9f2ef" opacity="0.57"/><path d="M21.8 73.0L25.3 72.7L25.3 85.4L21.8 86.2Z" fill="#e9f2ef" opacity="0.60"/><path d="M21.8 90.5L25.3 89.6L25.3 97.2L21.8 98.5Z" fill="#e9f2ef" opacity="0.59"/><path d="M26.6 28.7L30.6 30.6L30.6 49.5L26.6 48.6Z" fill="#e9f2ef" opacity="0.57"/><path d="M26.6 53.6L30.6 54.2L30.6 68.4L26.6 68.5Z" fill="#e9f2ef" opacity="0.76"/><path d="M26.6 72.6L30.6 72.4L30.6 84.2L26.6 85.1Z" fill="#e9f2ef" opacity="0.71"/><path d="M26.6 89.2L30.6 88.1L30.6 95.2L26.6 96.7Z" fill="#e9f2ef" opacity="0.53"/><path d="M20.9 15.4V104.1" stroke="#0d1a16" stroke-width="2.42"/><path d="M20.9 97.0L26.4 22.8L31.9 93.2" fill="none" stroke="#2d6652" stroke-width="2.18"/><path d="M20.9 59.7L31.9 60.7" stroke="#142b24" stroke-width="1.45"/><path d="M32.8 54.6L36.0 55.1L36.0 68.3L32.8 68.4Z" fill="#e9f2ef" opacity="0.37"/><path d="M32.8 72.2L36.0 72.0L36.0 83.0L32.8 83.7Z" fill="#e9f2ef" opacity="0.47"/><path d="M32.8 87.6L36.0 86.7L36.0 93.3L32.8 94.4Z" fill="#e9f2ef" opacity="0.46"/><path d="M37.2 33.7L40.9 35.4L40.9 51.8L37.2 51.0Z" fill="#e9f2ef" opacity="0.60"/><path d="M37.2 86.3L40.9 85.3L40.9 91.5L37.2 92.8Z" fill="#e9f2ef" opacity="0.49"/><path d="M31.9 21.9V99.4" stroke="#0d1a16" stroke-width="2.11"/><path d="M31.9 93.2L37.0 28.6L42.1 89.7" fill="none" stroke="#2d6652" stroke-width="1.90"/><path d="M31.9 60.7L42.1 61.5" stroke="#142b24" stroke-width="1.27"/><path d="M42.9 36.4L45.8 37.7L45.8 52.9L42.9 52.3Z" fill="#e9f2ef" opacity="0.38"/><path d="M42.9 71.5L45.8 71.3L45.8 80.8L42.9 81.5Z" fill="#e9f2ef" opacity="0.47"/><path d="M42.9 84.8L45.8 84.0L45.8 89.7L42.9 90.8Z" fill="#e9f2ef" opacity="0.31"/><path d="M46.8 38.2L50.1 39.8L50.1 53.9L46.8 53.2Z" fill="#e9f2ef" opacity="0.51"/><path d="M46.8 56.9L50.1 57.5L50.1 68.1L46.8 68.1Z" fill="#e9f2ef" opacity="0.31"/><path d="M42.1 28.0V95.0" stroke="#0d1a16" stroke-width="1.83"/><path d="M42.1 89.7L46.7 33.8L51.2 86.6" fill="none" stroke="#2d6652" stroke-width="1.65"/><path d="M42.1 61.5L51.2 62.3" stroke="#142b24" stroke-width="1.10"/><path d="M51.8 57.7L54.3 58.1L54.3 68.0L51.8 68.0Z" fill="#e9f2ef" opacity="0.25"/><path d="M51.8 70.9L54.3 70.7L54.3 78.9L51.8 79.5Z" fill="#e9f2ef" opacity="0.30"/><path d="M55.2 42.2L58.0 43.5L58.0 55.7L55.2 55.1Z" fill="#e9f2ef" opacity="0.24"/><path d="M55.2 58.3L58.0 58.8L58.0 67.9L55.2 68.0Z" fill="#e9f2ef" opacity="0.24"/><path d="M55.2 70.7L58.0 70.5L58.0 78.1L55.2 78.7Z" fill="#e9f2ef" opacity="0.26"/><path d="M55.2 81.4L58.0 80.7L58.0 85.2L55.2 86.3Z" fill="#e9f2ef" opacity="0.39"/><path d="M51.2 33.3V91.2" stroke="#0d1a16" stroke-width="1.58"/><path d="M51.2 86.6L55.0 38.3L58.9 83.9" fill="none" stroke="#2d6652" stroke-width="1.42"/><path d="M51.2 62.3L58.9 62.9" stroke="#142b24" stroke-width="0.95"/><path d="M59.5 44.2L61.9 45.3L61.9 56.6L59.5 56.0Z" fill="#e9f2ef" opacity="0.19"/><path d="M59.5 59.0L61.9 59.4L61.9 67.9L59.5 67.9Z" fill="#e9f2ef" opacity="0.18"/><path d="M59.5 70.4L61.9 70.2L61.9 77.2L59.5 77.8Z" fill="#e9f2ef" opacity="0.26"/><path d="M59.5 80.2L61.9 79.6L61.9 83.8L59.5 84.7Z" fill="#e9f2ef" opacity="0.17"/><path d="M62.8 45.8L65.6 47.0L65.6 57.4L62.8 56.8Z" fill="#e9f2ef" opacity="0.18"/><path d="M62.8 59.6L65.6 60.0L65.6 67.8L62.8 67.8Z" fill="#e9f2ef" opacity="0.25"/><path d="M62.8 70.1L65.6 69.9L65.6 76.4L62.8 77.0Z" fill="#e9f2ef" opacity="0.19"/><path d="M58.9 37.9V87.9" stroke="#0d1a16" stroke-width="1.36"/><path d="M58.9 83.9L62.7 42.5L66.5 81.3" fill="none" stroke="#2d6652" stroke-width="1.23"/><path d="M58.9 62.9L66.5 63.5" stroke="#142b24" stroke-width="0.82"/><path d="M67.0 60.2L69.1 60.6L69.1 67.7L67.0 67.8Z" fill="#e9f2ef" opacity="0.11"/><path d="M67.0 69.8L69.1 69.7L69.1 75.6L67.0 76.1Z" fill="#e9f2ef" opacity="0.11"/><path d="M67.0 78.2L69.1 77.6L69.1 81.2L67.0 82.0Z" fill="#e9f2ef" opacity="0.16"/><path d="M69.9 49.1L72.4 50.2L72.4 58.9L69.9 58.4Z" fill="#e9f2ef" opacity="0.13"/><path d="M69.9 60.7L72.4 61.1L72.4 67.7L69.9 67.7Z" fill="#e9f2ef" opacity="0.10"/><path d="M69.9 77.4L72.4 76.7L72.4 80.0L69.9 80.9Z" fill="#e9f2ef" opacity="0.15"/><path d="M66.5 42.4V84.7" stroke="#0d1a16" stroke-width="1.15"/><path d="M66.5 81.3L69.8 46.3L73.2 79.0" fill="none" stroke="#2d6652" stroke-width="1.04"/><path d="M66.5 63.5L73.2 64.1" stroke="#142b24" stroke-width="0.69"/><path d="M73.2 46.4V81.8" stroke="#0d1a16" stroke-width="0.97"/><path d="M73.2 79.0L76.0 49.7L78.8 77.1" fill="none" stroke="#2d6652" stroke-width="0.87"/><path d="M73.2 64.1L78.8 64.6" stroke="#142b24" stroke-width="0.58"/><path d="M78.8 49.7V79.4" stroke="#0d1a16" stroke-width="0.81"/><path d="M78.8 77.1L81.4 52.6L84.0 75.3" fill="none" stroke="#2d6652" stroke-width="0.73"/><path d="M78.8 64.6L84.0 65.0" stroke="#142b24" stroke-width="0.49"/><path d="M84.0 52.8V77.2" stroke="#0d1a16" stroke-width="0.67"/><path d="M84.0 75.3L86.2 55.2L88.4 73.8" fill="none" stroke="#2d6652" stroke-width="0.60"/><path d="M84.0 65.0L88.4 65.4" stroke="#142b24" stroke-width="0.40"/><path d="M88.4 55.4V75.4" stroke="#0d1a16" stroke-width="0.55"/><path d="M88.4 73.8L90.5 57.5L92.6 72.3" fill="none" stroke="#2d6652" stroke-width="0.49"/><path d="M88.4 65.4L92.6 65.7" stroke="#142b24" stroke-width="0.33"/><path d="M215.2 77.0L212.1 76.7L212.1 93.2L215.2 94.0Z" fill="#e9f2ef" opacity="0.97"/><path d="M210.9 19.1L207.4 20.7L207.4 45.9L210.9 45.1Z" fill="#e9f2ef" opacity="0.95"/><path d="M210.9 51.6L207.4 52.2L207.4 71.0L210.9 71.2Z" fill="#e9f2ef" opacity="0.74"/><path d="M216.0 3.0V117.0" stroke="#0d1a16" stroke-width="3.00"/><path d="M216.0 107.9L211.1 11.4L206.2 104.2" fill="none" stroke="#2d6652" stroke-width="2.70"/><path d="M216.0 60.0L206.2 60.6" stroke="#142b24" stroke-width="1.80"/><path d="M205.3 21.7L201.7 23.3L201.7 47.1L205.3 46.3Z" fill="#e9f2ef" opacity="0.58"/><path d="M205.3 52.5L201.7 53.0L201.7 70.8L205.3 71.0Z" fill="#e9f2ef" opacity="0.59"/><path d="M205.3 76.1L201.7 75.8L201.7 90.6L205.3 91.5Z" fill="#e9f2ef" opacity="0.72"/><path d="M205.3 96.6L201.7 95.6L201.7 104.5L205.3 105.9Z" fill="#e9f2ef" opacity="0.55"/><path d="M200.4 23.9L196.4 25.8L196.4 48.2L200.4 47.4Z" fill="#e9f2ef" opacity="0.51"/><path d="M200.4 75.6L196.4 75.3L196.4 89.3L200.4 90.3Z" fill="#e9f2ef" opacity="0.82"/><path d="M200.4 95.2L196.4 93.9L196.4 102.3L200.4 103.9Z" fill="#e9f2ef" opacity="0.59"/><path d="M206.2 8.8V112.5" stroke="#0d1a16" stroke-width="2.73"/><path d="M206.2 104.2L200.6 17.0L195.1 100.0" fill="none" stroke="#2d6652" stroke-width="2.45"/><path d="M206.2 60.6L195.1 61.4" stroke="#142b24" stroke-width="1.64"/><path d="M194.2 26.8L190.7 28.5L190.7 49.4L194.2 48.7Z" fill="#e9f2ef" opacity="0.49"/><path d="M194.2 75.1L190.7 74.7L190.7 87.8L194.2 88.7Z" fill="#e9f2ef" opacity="0.57"/><path d="M189.4 54.9L185.4 55.5L185.4 70.2L189.4 70.3Z" fill="#e9f2ef" opacity="0.61"/><path d="M189.4 91.8L185.4 90.6L185.4 97.9L189.4 99.5Z" fill="#e9f2ef" opacity="0.72"/><path d="M195.1 15.4V107.3" stroke="#0d1a16" stroke-width="2.42"/><path d="M195.1 100.0L189.6 23.0L184.1 95.8" fill="none" stroke="#2d6652" stroke-width="2.18"/><path d="M195.1 61.4L184.1 62.1" stroke="#142b24" stroke-width="1.45"/><path d="M183.2 31.9L180.0 33.5L180.0 51.7L183.2 51.0Z" fill="#e9f2ef" opacity="0.54"/><path d="M183.2 55.8L180.0 56.3L180.0 69.9L183.2 70.1Z" fill="#e9f2ef" opacity="0.52"/><path d="M178.8 56.4L175.1 57.0L175.1 69.7L178.8 69.9Z" fill="#e9f2ef" opacity="0.55"/><path d="M178.8 73.6L175.1 73.3L175.1 83.9L178.8 84.8Z" fill="#e9f2ef" opacity="0.36"/><path d="M178.8 88.6L175.1 87.4L175.1 93.8L178.8 95.3Z" fill="#e9f2ef" opacity="0.49"/><path d="M184.1 21.9V102.2" stroke="#0d1a16" stroke-width="2.11"/><path d="M184.1 95.8L179.0 28.7L173.9 91.9" fill="none" stroke="#2d6652" stroke-width="1.90"/><path d="M184.1 62.1L173.9 62.7" stroke="#142b24" stroke-width="1.27"/><path d="M173.1 36.7L170.2 38.0L170.2 53.8L173.1 53.2Z" fill="#e9f2ef" opacity="0.36"/><path d="M173.1 57.3L170.2 57.7L170.2 69.5L173.1 69.7Z" fill="#e9f2ef" opacity="0.30"/><path d="M173.1 73.1L170.2 72.8L170.2 82.7L173.1 83.4Z" fill="#e9f2ef" opacity="0.46"/><path d="M173.1 86.8L170.2 86.0L170.2 91.9L173.1 93.0Z" fill="#e9f2ef" opacity="0.46"/><path d="M169.2 38.5L165.9 40.0L165.9 54.7L169.2 54.0Z" fill="#e9f2ef" opacity="0.47"/><path d="M169.2 57.9L165.9 58.4L165.9 69.4L169.2 69.5Z" fill="#e9f2ef" opacity="0.37"/><path d="M169.2 72.7L165.9 72.4L165.9 81.6L169.2 82.4Z" fill="#e9f2ef" opacity="0.50"/><path d="M169.2 85.6L165.9 84.6L165.9 90.1L169.2 91.4Z" fill="#e9f2ef" opacity="0.38"/><path d="M173.9 28.0V97.5" stroke="#0d1a16" stroke-width="1.83"/><path d="M173.9 91.9L169.3 33.9L164.8 88.5" fill="none" stroke="#2d6652" stroke-width="1.65"/><path d="M173.9 62.7L164.8 63.3" stroke="#142b24" stroke-width="1.10"/><path d="M164.2 40.8L161.7 42.0L161.7 55.6L164.2 55.0Z" fill="#e9f2ef" opacity="0.38"/><path d="M164.2 58.6L161.7 59.0L161.7 69.2L164.2 69.3Z" fill="#e9f2ef" opacity="0.33"/><path d="M164.2 72.3L161.7 72.0L161.7 80.5L164.2 81.2Z" fill="#e9f2ef" opacity="0.32"/><path d="M164.2 84.1L161.7 83.4L161.7 88.5L164.2 89.5Z" fill="#e9f2ef" opacity="0.23"/><path d="M160.8 42.4L158.0 43.7L158.0 56.4L160.8 55.8Z" fill="#e9f2ef" opacity="0.40"/><path d="M160.8 59.1L158.0 59.5L158.0 69.0L160.8 69.2Z" fill="#e9f2ef" opacity="0.35"/><path d="M160.8 71.9L158.0 71.7L158.0 79.6L160.8 80.3Z" fill="#e9f2ef" opacity="0.35"/><path d="M160.8 83.1L158.0 82.2L158.0 87.0L160.8 88.1Z" fill="#e9f2ef" opacity="0.30"/><path d="M164.8 33.3V93.3" stroke="#0d1a16" stroke-width="1.58"/><path d="M164.8 88.5L161.0 38.4L157.1 85.6" fill="none" stroke="#2d6652" stroke-width="1.42"/><path d="M164.8 63.3L157.1 63.8" stroke="#142b24" stroke-width="0.95"/><path d="M156.5 44.4L154.1 45.5L154.1 57.2L156.5 56.7Z" fill="#e9f2ef" opacity="0.16"/><path d="M156.5 59.8L154.1 60.1L154.1 68.9L156.5 69.0Z" fill="#e9f2ef" opacity="0.16"/><path d="M156.5 71.5L154.1 71.3L154.1 78.6L156.5 79.2Z" fill="#e9f2ef" opacity="0.21"/><path d="M153.2 46.0L150.4 47.2L150.4 58.0L153.2 57.4Z" fill="#e9f2ef" opacity="0.22"/><path d="M153.2 60.3L150.4 60.7L150.4 68.7L153.2 68.8Z" fill="#e9f2ef" opacity="0.27"/><path d="M153.2 71.2L150.4 71.0L150.4 77.7L153.2 78.4Z" fill="#e9f2ef" opacity="0.16"/><path d="M153.2 80.8L150.4 79.9L150.4 84.0L153.2 85.0Z" fill="#e9f2ef" opacity="0.24"/><path d="M157.1 37.9V89.7" stroke="#0d1a16" stroke-width="1.36"/><path d="M157.1 85.6L153.3 42.5L149.5 82.7" fill="none" stroke="#2d6652" stroke-width="1.23"/><path d="M157.1 63.8L149.5 64.3" stroke="#142b24" stroke-width="0.82"/><path d="M149.0 70.8L146.9 70.6L146.9 76.8L149.0 77.3Z" fill="#e9f2ef" opacity="0.14"/><path d="M149.0 79.5L146.9 78.8L146.9 82.5L149.0 83.4Z" fill="#e9f2ef" opacity="0.15"/><path d="M146.1 49.3L143.6 50.4L143.6 59.4L146.1 58.9Z" fill="#e9f2ef" opacity="0.14"/><path d="M146.1 70.6L143.6 70.3L143.6 76.0L146.1 76.6Z" fill="#e9f2ef" opacity="0.15"/><path d="M146.1 78.6L143.6 77.9L143.6 81.2L146.1 82.2Z" fill="#e9f2ef" opacity="0.15"/><path d="M149.5 42.4V86.2" stroke="#0d1a16" stroke-width="1.15"/><path d="M149.5 82.7L146.2 46.4L142.8 80.2" fill="none" stroke="#2d6652" stroke-width="1.04"/><path d="M149.5 64.3L142.8 64.7" stroke="#142b24" stroke-width="0.69"/><path d="M142.8 46.4V83.1" stroke="#0d1a16" stroke-width="0.97"/><path d="M142.8 80.2L140.0 49.7L137.2 78.0" fill="none" stroke="#2d6652" stroke-width="0.87"/><path d="M142.8 64.7L137.2 65.1" stroke="#142b24" stroke-width="0.58"/><path d="M137.2 49.7V80.5" stroke="#0d1a16" stroke-width="0.81"/><path d="M137.2 78.0L134.6 52.6L132.0 76.1" fill="none" stroke="#2d6652" stroke-width="0.73"/><path d="M137.2 65.1L132.0 65.4" stroke="#142b24" stroke-width="0.49"/><path d="M132.0 52.8V78.1" stroke="#0d1a16" stroke-width="0.67"/><path d="M132.0 76.1L129.8 55.2L127.6 74.4" fill="none" stroke="#2d6652" stroke-width="0.60"/><path d="M132.0 65.4L127.6 65.7" stroke="#142b24" stroke-width="0.40"/><path d="M127.6 55.4V76.1" stroke="#0d1a16" stroke-width="0.55"/><path d="M127.6 74.4L125.5 57.5L123.4 72.8" fill="none" stroke="#2d6652" stroke-width="0.49"/><path d="M127.6 65.7L123.4 66.0" stroke="#142b24" stroke-width="0.33"/><rect x="103" y="63" width="10.5" height="8" fill="#f4f8f6"/><path d="M0 113L101 72H116L216 117V144H0Z" fill="url(#fg)"/><path d="M0 121L101 73" stroke="#4a4e4c" stroke-width="1.2"/><path d="M216 124L116 73" stroke="#464a48" stroke-width="1.2"/><path d="M0 113L101 72M216 117L116 72" stroke="#222423" stroke-width="2.5"/><path d="M108 72L-40 144" stroke="#262827" stroke-width="2"/><path d="M108 72L12 144" stroke="#3f4140" stroke-width="1"/><path d="M108 72L40 144" stroke="#262827" stroke-width="1.5"/><path d="M108 72L75 144" stroke="#3c3e3d" stroke-width="1"/><path d="M108 72L96 144" stroke="#272928" stroke-width="1.2"/><path d="M108 72L118 144" stroke="#3f4140" stroke-width="1"/><path d="M108 72L140 144" stroke="#272928" stroke-width="1.2"/><path d="M108 72L172 144" stroke="#3d3f3e" stroke-width="1"/><path d="M108 72L205 144" stroke="#262827" stroke-width="1.5"/><path d="M108 72L250 144" stroke="#414342" stroke-width="1"/></g></svg></div>
<div class="a" style="left:953px;top:497px;width:127px;height:96px;overflow:hidden;background:#cdc7bb"><svg style="display:block;filter:blur(1px)" width="127" height="95" viewBox="0 0 127 95"><defs><radialGradient id="face" cx="0.5" cy="0.42" r="0.6"><stop offset="0" stop-color="#e6b8a8"/><stop offset="0.55" stop-color="#d49c8c"/><stop offset="1" stop-color="#b07c6c"/></radialGradient><linearGradient id="wall" x1="0" y1="0" x2="1" y2="0"><stop offset="0" stop-color="#cdc7bb"/><stop offset="0.5" stop-color="#d6d1c6"/><stop offset="1" stop-color="#c4beb2"/></linearGradient><linearGradient id="hair" x1="0" y1="0" x2="0" y2="1"><stop offset="0" stop-color="#4e4944"/><stop offset="1" stop-color="#7e7870"/></linearGradient></defs><rect width="127" height="95" fill="url(#wall)"/><path d="M0 0H127V3L112 20L0 15Z" fill="#dcdbd7"/><path d="M112 20L127 3V95H112Z" fill="#a8a29a"/><path d="M110 22H113V95H110Z" fill="#8e8880"/><rect x="87" y="51" width="22" height="10" rx="3" fill="#ebe9e4"/><rect x="94" y="61" width="6" height="30" fill="#d4cdbf"/><path d="M4 95L10 85Q28 77 44 75H72Q94 79 108 88L114 95Z" fill="#c4c8d0"/><path d="M30 84Q40 80 46 82M78 80Q88 82 96 88" stroke="#e8eaee" stroke-width="2" fill="none"/><path d="M47 73H70L66 88H51Z" fill="#c09080"/><ellipse cx="35.5" cy="47" rx="3" ry="6" fill="#c08c7c"/><ellipse cx="82" cy="47" rx="3" ry="6" fill="#c4907e"/><ellipse cx="58.5" cy="49" rx="23" ry="28" fill="url(#face)"/><path d="M34 46Q30 13 58 11Q86 11 87 38L85 52Q83 34 78 30Q60 24 42 30Q37 34 36 48Z" fill="url(#hair)"/><path d="M44 21Q60 15 76 22" stroke="#3e3a36" stroke-width="3" fill="none"/><path d="M40 45Q45 43 51 45.5M62 45.5Q67 43 72 45" stroke="#7a5448" stroke-width="2" fill="none"/><ellipse cx="56" cy="52" rx="4" ry="5" fill="#f0c8b8" opacity="0.7"/><path d="M47 64Q56 60 65.5 63.5Q57 68.5 47 64Z" fill="#7e3a3a"/><path d="M40 95L42 80Q50 76 60 78L62 95Z" fill="#cfcbb8"/><ellipse cx="50" cy="77" rx="11" ry="7.5" fill="#8d9aa8"/><ellipse cx="48" cy="75" rx="5" ry="3" fill="#a8b4c0"/></svg></div>
</div></body></html>
